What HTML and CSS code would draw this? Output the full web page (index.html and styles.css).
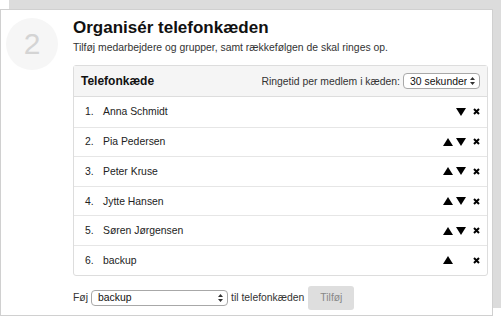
FILE: index.html
```html
<!DOCTYPE html>
<html lang="da">
  <head>
    <meta charset="UTF-8" />
    <title>Organisér telefonkæden</title>
    <link rel="stylesheet" href="styles.css">
  </head>
  <body>
    <div class="stack">
      <!-- kortet bagved -->
      <div class="back-card"></div>

      <div class="card">
        <div class="step">2</div>

        <div class="content">
          <h1 class="title">Organisér telefonkæden</h1>
          <p class="lead">Tilføj medarbejdere og grupper, samt rækkefølgen de skal ringes op.</p>

          <div class="panel">
            <div class="panel-head">
              <span class="panel-title">Telefonkæde</span>
              <label class="ring-time">
                Ringetid per medlem i kæden:
                <span class="select small">
                  <select>
                    <option>30 sekunder</option>
                    <option>60 sekunder</option>
                  </select>
                  <svg class="select-arrows" width="5" height="8" viewBox="0 0 5 8"><path d="M2.5 0L5 3H0zM2.5 8L0 5h5z" fill="#333"/></svg>
                </span>
              </label>
            </div>

            <ol class="chain">
              <li class="row">
                <span class="num">1.</span><span class="name">Anna Schmidt</span>
                <span class="tools">
                  <span class="tool"></span>
                  <svg class="tool" width="10" height="8" viewBox="0 0 10 8"><path d="M0 0h10L5 8z"/></svg>
                  <svg class="tool del" width="7" height="7" viewBox="0 0 7 7"><path d="M1 1l5 5M6 1L1 6" stroke="#000" stroke-width="2"/></svg>
                </span>
              </li>
              <li class="row">
                <span class="num">2.</span><span class="name">Pia Pedersen</span>
                <span class="tools">
                  <svg class="tool" width="10" height="8" viewBox="0 0 10 8"><path d="M5 0l5 8H0z"/></svg>
                  <svg class="tool" width="10" height="8" viewBox="0 0 10 8"><path d="M0 0h10L5 8z"/></svg>
                  <svg class="tool del" width="7" height="7" viewBox="0 0 7 7"><path d="M1 1l5 5M6 1L1 6" stroke="#000" stroke-width="2"/></svg>
                </span>
              </li>
              <li class="row">
                <span class="num">3.</span><span class="name">Peter Kruse</span>
                <span class="tools">
                  <svg class="tool" width="10" height="8" viewBox="0 0 10 8"><path d="M5 0l5 8H0z"/></svg>
                  <svg class="tool" width="10" height="8" viewBox="0 0 10 8"><path d="M0 0h10L5 8z"/></svg>
                  <svg class="tool del" width="7" height="7" viewBox="0 0 7 7"><path d="M1 1l5 5M6 1L1 6" stroke="#000" stroke-width="2"/></svg>
                </span>
              </li>
              <li class="row">
                <span class="num">4.</span><span class="name">Jytte Hansen</span>
                <span class="tools">
                  <svg class="tool" width="10" height="8" viewBox="0 0 10 8"><path d="M5 0l5 8H0z"/></svg>
                  <svg class="tool" width="10" height="8" viewBox="0 0 10 8"><path d="M0 0h10L5 8z"/></svg>
                  <svg class="tool del" width="7" height="7" viewBox="0 0 7 7"><path d="M1 1l5 5M6 1L1 6" stroke="#000" stroke-width="2"/></svg>
                </span>
              </li>
              <li class="row">
                <span class="num">5.</span><span class="name">Søren Jørgensen</span>
                <span class="tools">
                  <svg class="tool" width="10" height="8" viewBox="0 0 10 8"><path d="M5 0l5 8H0z"/></svg>
                  <svg class="tool" width="10" height="8" viewBox="0 0 10 8"><path d="M0 0h10L5 8z"/></svg>
                  <svg class="tool del" width="7" height="7" viewBox="0 0 7 7"><path d="M1 1l5 5M6 1L1 6" stroke="#000" stroke-width="2"/></svg>
                </span>
              </li>
              <li class="row">
                <span class="num">6.</span><span class="name">backup</span>
                <span class="tools">
                  <svg class="tool" width="10" height="8" viewBox="0 0 10 8"><path d="M5 0l5 8H0z"/></svg>
                  <span class="tool"></span>
                  <svg class="tool del" width="7" height="7" viewBox="0 0 7 7"><path d="M1 1l5 5M6 1L1 6" stroke="#000" stroke-width="2"/></svg>
                </span>
              </li>
            </ol>
          </div>

          <!-- tilføj til kæden -->
          <div class="add-row">
            <span>Føj</span>
            <span class="select wide">
              <select>
                <option>backup</option>
                <option>Anna Schmidt</option>
              </select>
              <svg class="select-arrows" width="5" height="8" viewBox="0 0 5 8"><path d="M2.5 0L5 3H0zM2.5 8L0 5h5z" fill="#333"/></svg>
            </span>
            <span>til telefonkæden</span>
            <button class="btn" disabled>Tilføj</button>
          </div>
        </div>
      </div>
    </div>
  </body>
</html>
```

FILE: styles.css
```css
* {
  padding: 0;
  margin: 0;
  box-sizing: border-box;
}

body {
  font-family: "Liberation Sans", Arial, sans-serif;
  color: #222;
  background-color: #fff;
}

.stack {
  position: relative;
  width: 502px;
  height: 317px;
}

.back-card {
  position: absolute;
  top: 0;
  left: 9px;
  width: 492px;
  height: 308px;

  background-color: #dcdcdc;
}

.card {
  position: relative;
  top: 9px;

  display: flex;
  gap: 15px;
  width: 493px;
  height: 307px;
  padding: 8px 4px 0 5px;
  border: 1px solid #d0d0d0;

  background-color: #fff;
}

.step {
  flex: none;
  width: 52px;
  height: 52px;
  border-radius: 50%;

  text-align: center;
  line-height: 52px;
  font-size: 30px;
  color: #d4d4d4;

  background-color: #f6f6f6;
}

.content {
  flex: 1;
}

.title {
  font-size: 17px;
  line-height: 20px;
  font-weight: bold;
  color: #111;
}

.lead {
  margin-top: 3px;
  font-size: 10.4px;
  line-height: 13px;
  color: #333;
}

.panel {
  margin-top: 11px;
  border: 1px solid #ddd;
  border-radius: 3px;
}

.panel-head {
  display: flex;
  align-items: center;
  justify-content: space-between;
  height: 31px;
  padding: 0 7px;
  border-bottom: 1px solid #ddd;

  background-color: #f5f5f5;
}

.panel-title {
  font-size: 12px;
  font-weight: bold;
  color: #111;
}

.ring-time {
  display: flex;
  align-items: center;
  gap: 3px;
  font-size: 10.4px;
  color: #333;
}

.select {
  position: relative;
  display: inline-block;
}

.select select {
  appearance: none;
  -webkit-appearance: none;
  height: 16px;
  padding: 0 12px 0 6px;
  border: 1px solid #a8a8a8;
  border-radius: 4px;

  font-family: inherit;
  font-size: 10.4px;
  color: #111;

  background-color: #fff;
}

.select.small select {
  width: 77px;
}

.select.wide select {
  width: 137px;
}

.select-arrows {
  position: absolute;
  top: 4px;
  right: 5px;
}

.chain {
  list-style: none;
}

.chain .row {
  display: flex;
  align-items: center;
  height: 29.6px;
  padding: 0 7px 0 11px;
  border-top: 1px solid #e6e6e6;

  font-size: 10.4px;
  color: #222;
}

.chain .row:first-child {
  border-top: none;
}

.chain .num {
  width: 18px;
}

.chain .name {
  flex: 1;
}

.tools {
  display: flex;
  align-items: center;
  gap: 3px;
}

.tools .tool {
  width: 10px;
  height: 8px;
}

.tools .del {
  width: 7px;
  height: 7px;
  margin-left: 4px;
}

.add-row {
  display: flex;
  align-items: center;
  gap: 3px;
  margin-top: 10px;

  font-size: 10.4px;
  color: #333;
}

.btn {
  width: 46px;
  height: 24px;
  margin-left: 1px;
  border: none;
  border-radius: 3px;

  font-family: inherit;
  font-size: 10.4px;
  color: #888;

  background-color: #dedede;
}
```
